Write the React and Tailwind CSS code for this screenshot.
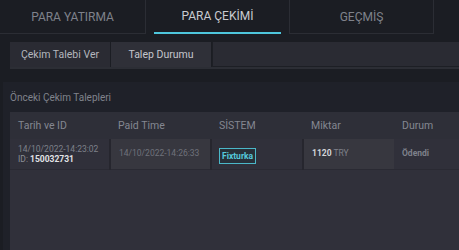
import React from 'react';

const rows = [
    {
        date: '14/10/2022-14:23:02',
        id: '150032731',
        paid: '14/10/2022-14:26:33',
        system: 'Fixturka',
        amount: '1120',
        currency: 'TRY',
        status: 'Ödendi',
    },
];

export default function App() {
    return (
        <div
            className="w-[459px] h-[250px] overflow-hidden bg-[#1b1d23] text-[#8b8e97]"
            style={{ fontFamily: 'Roboto, "Liberation Sans", sans-serif' }}
        >
            {/* top tabs */}
            <div className="flex h-[34px]">
                <div className="w-[146px] flex items-center justify-center border-r border-b border-[#2b2d34] text-[12px] text-[#7f828b]">
                    PARA YATIRMA
                </div>
                <div className="ml-[8px] w-[127px] flex items-center justify-center border-b-2 border-[#4ec6dc] text-[12px] text-[#c9cbd1]">
                    PARA ÇEKİMİ
                </div>
                <div className="ml-[8px] w-[145px] flex items-center justify-center border-x border-b border-[#2b2d34] text-[12px] text-[#7f828b]">
                    GEÇMİŞ
                </div>
            </div>

            {/* sub tabs */}
            <div className="mt-[8px] ml-[10px] flex h-[27px] border-b-2 border-[#2c2e35]">
                <div className="w-[100px] flex items-center justify-center bg-[#2a2b33] text-[10.5px] text-[#b4b6bd]">
                    Çekim Talebi Ver
                </div>
                <div className="ml-px w-[100px] flex items-center justify-center bg-[#2f3038] text-[10.5px] text-[#c4c6cc]">
                    Talep Durumu
                </div>
                <div className="flex-1 ml-px bg-[#2a2b33] border-l border-b border-[#1d1f25]"></div>
            </div>

            {/* history panel */}
            <div className="mt-[13px] ml-[3px] h-[200px] bg-[#1f2129]">
                <div className="h-[30px] flex items-center pl-[7px] text-[10px] text-[#80838c]">
                    Önceki Çekim Talepleri
                </div>
                <div className="ml-[7px] h-[170px] bg-[#30303a]">
                    <table className="w-full border-collapse text-left">
                        <thead>
                            <tr className="h-[27px] bg-[#2e2f38] text-[10.5px] text-[#848791]">
                                <th className="w-[100px] pl-[8px] font-normal">Tarih ve ID</th>
                                <th className="w-[101px] pl-[8px] font-normal">Paid Time</th>
                                <th className="w-[92px] pl-[8px] font-normal">SİSTEM</th>
                                <th className="w-[91px] pl-[8px] font-normal">Miktar</th>
                                <th className="pl-[8px] font-normal">Durum</th>
                            </tr>
                        </thead>
                        <tbody>
                            {rows.map((row, index) => (
                                <tr key={index} className="h-[30px] border-b border-[#2a2a33]">
                                    <td className="pl-[8px] border-r-2 border-[#26262e] bg-[#30303a] leading-[10px]">
                                        <div className="text-[8.5px] text-[#7e818a]">{row.date}</div>
                                        <div className="text-[8.5px] text-[#8b8e97]">
                                            ID: <span className="font-bold text-[#e2e3e6]">{row.id}</span>
                                        </div>
                                    </td>
                                    <td className="pl-[8px] border-r-2 border-[#26262e] bg-[#37373f] text-[8.5px] text-[#6f727b]">
                                        {row.paid}
                                    </td>
                                    <td className="pl-[7px] border-r-2 border-[#26262e] bg-[#30303a]">
                                        <span className="inline-block px-[2px] py-[1.5px] border border-[#4bb7c8] bg-[#283039] text-[8.5px] font-bold text-[#56c9dc] leading-[11px]">
                                            {row.system}
                                        </span>
                                    </td>
                                    <td className="pl-[8px] bg-[#37373f] text-[8.5px]">
                                        <span className="font-bold text-[#d4d5d9]">{row.amount}</span>{' '}
                                        <span className="text-[#7e818a]">{row.currency}</span>
                                    </td>
                                    <td className="pl-[8px] bg-[#30303a] text-[8.5px] font-bold text-[#7e818a]">
                                        {row.status}
                                    </td>
                                </tr>
                            ))}
                        </tbody>
                    </table>
                </div>
            </div>
        </div>
    );
}
